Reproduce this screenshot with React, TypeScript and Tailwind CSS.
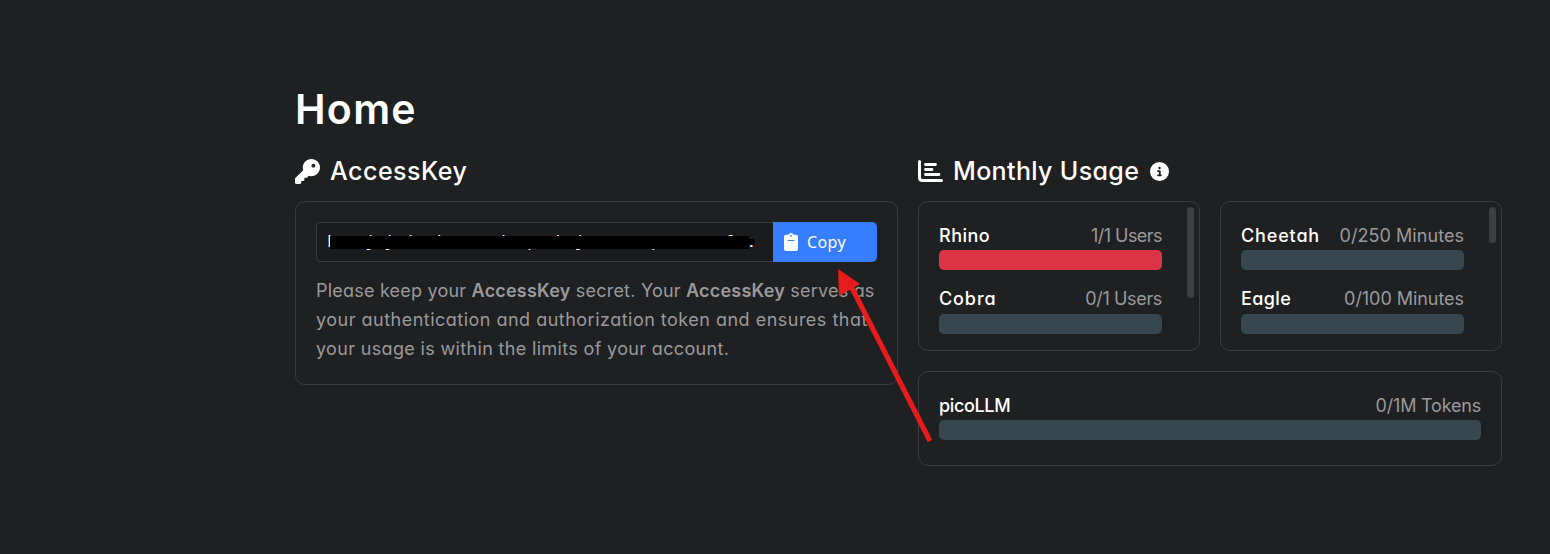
import type { ReactNode } from "react";
import { FaKey, FaCircleInfo } from "react-icons/fa6";

const Line = ({ className, children }: { className: string; children: ReactNode }) => (
  <span className={`block whitespace-nowrap ${className}`}>{children}</span>
);

type Usage = {
  name: string;
  value: string;
  nameClass: string;
  valueClass: string;
  full?: boolean;
  labelHeight?: string;
};

function Meter({ name, value, nameClass, valueClass, full, labelHeight = "h-7" }: Usage) {
  return (
    <div>
      <div className={`flex items-start justify-between whitespace-nowrap leading-7 ${labelHeight}`}>
        <span className={`font-medium text-white ${nameClass}`}>{name}</span>
        <span className={`text-[#9a9a9b] ${valueClass}`}>{value}</span>
      </div>
      <div className={`h-5 rounded-[5px] ${full ? "bg-[#dc3545]" : "bg-[#37474f]"}`} />
    </div>
  );
}

function ScrollCard({ items, thumb }: { items: Usage[]; thumb: string }) {
  return (
    <div className="relative h-[150px] w-[282px] rounded-[10px] border border-[#3b3c3e] pt-5 pr-[37px] pl-5">
      <div className="flex flex-col gap-[15px]">
        {items.map((u) => (
          <Meter key={u.name} {...u} />
        ))}
      </div>
      <div className={`absolute top-[5px] right-[5px] w-[7px] rounded-full bg-[#3e3f41] ${thumb}`} />
    </div>
  );
}

export default function App() {
  return (
    <div className="relative h-[554px] w-[1550px] overflow-hidden bg-[#1f2022] pt-[84px] pl-[295px] font-['Inter',sans-serif] text-[18px] [font-feature-settings:'cv11']">
      <h1 className="h-[70px] text-[41px] leading-[50px] font-semibold tracking-[1.3px] text-white">
        <span>Home</span>
      </h1>
      <div className="flex gap-5">
        <section className="w-[603px]">
          <h2 className="mb-2 flex h-[39px] items-center pb-[5px] text-[25px] font-medium text-white">
            <FaKey className="mr-[10px] size-[25px]" />
            <span className="pt-[2px] tracking-[0.5px]">AccessKey</span>
          </h2>
          <div className="h-[184px] rounded-[10px] border border-[#3b3c3e] px-5 pt-5">
            <div className="flex h-10">
              <div className="relative flex flex-1 items-center rounded-l-[5px] border border-r-0 border-[#3b3c3e] bg-[#1a1b1d] pl-[10px] font-['DejaVu_Sans_Mono',monospace] text-[16px] tracking-[-0.1px] text-white">
                <span className="whitespace-pre">Lxxxjxjxdxxdxxxxxxixxpxxhxjxxxxxxxpxxxxxxxlx.</span>
                <div className="absolute top-[13px] left-[13px] h-[13px] w-[419px] bg-black" />
                <div className="absolute top-[16px] left-[430px] h-[6px] w-[8px] rounded-r bg-black" />
              </div>
              <button className="flex w-[104px] items-center rounded-r-[5px] bg-[#377dff] pl-[11px] font-['Noto_Sans',sans-serif] text-[16px] tracking-[0.4px] text-white">
                <svg viewBox="0 0 14 18" className="mr-[9px] h-[18px] w-[14px]">
                  <path
                    fill="currentColor"
                    fillRule="evenodd"
                    d="M2 1.8H4.4Q5.2 0 7 0T9.6 1.8H12A2 2 0 0 1 14 3.8V16A2 2 0 0 1 12 18H2A2 2 0 0 1 0 16V3.8A2 2 0 0 1 2 1.8ZM7 2.1A.9.9 0 1 0 7 3.9A.9.9 0 1 0 7 2.1ZM4 6.9A.5.5 0 0 0 4 7.9H10A.5.5 0 0 0 10 6.9Z"
                  />
                </svg>
                <span>Copy</span>
              </button>
            </div>
            <p className="mt-[14px] leading-[29px] text-[#9a9a9b]">
              <Line className="tracking-[0.21px]">
                Please keep your <b className="font-semibold">AccessKey</b> secret. Your{" "}
                <b className="font-semibold">AccessKey</b> serves as
              </Line>
              <Line className="tracking-[0.49px]">your authentication and authorization token and ensures that</Line>
              <Line className="tracking-[0.34px]">your usage is within the limits of your account.</Line>
            </p>
          </div>
        </section>
        <section className="w-[584px]">
          <h2 className="mb-2 flex h-[39px] items-center pb-[5px] text-[25px] font-medium text-white">
            <svg viewBox="0 0 25 22" className="mr-[10px] h-[22px] w-[25px]" fill="none" stroke="currentColor" strokeLinecap="round">
              <path strokeWidth="3" d="M1.5 1.5V17.5Q1.5 20.5 4.5 20.5H23.5" />
              <path strokeWidth="2.8" d="M7.5 4.5H17.5M7.5 9.5H14M7.5 14.5H21" />
            </svg>
            <span className="pt-[2px] tracking-[0.35px]">Monthly Usage</span>
            <FaCircleInfo className="ml-[11px] size-[19px]" />
          </h2>
          <div className="flex gap-5">
            <ScrollCard
              thumb="h-[91px]"
              items={[
                { name: "Rhino", value: "1/1 Users", nameClass: "tracking-[0.5px]", valueClass: "tracking-[-0.55px]", full: true },
                { name: "Cobra", value: "0/1 Users", nameClass: "tracking-[0.9px]", valueClass: "tracking-[-0.35px]", labelHeight: "h-[29px]" },
              ]}
            />
            <ScrollCard
              thumb="h-[36px]"
              items={[
                { name: "Cheetah", value: "0/250 Minutes", nameClass: "tracking-[0.85px]", valueClass: "tracking-[0.05px]" },
                { name: "Eagle", value: "0/100 Minutes", nameClass: "tracking-[0.4px]", valueClass: "tracking-[-0.05px]", labelHeight: "h-[29px]" },
              ]}
            />
          </div>
          <div className="mt-5 h-[95px] rounded-[10px] border border-[#3b3c3e] px-5 pt-5">
            <Meter name="picoLLM" value="0/1M Tokens" nameClass="tracking-[-0.35px]" valueClass="tracking-[-0.2px]" />
          </div>
        </section>
      </div>
      <svg viewBox="0 0 100 180" className="absolute top-[266px] left-[835px] h-[180px] w-[100px]">
        <path d="M16 20L95 175" stroke="#e61c1c" strokeWidth="5" />
        <path d="M3 3L25 18L4 30Z" fill="#e61c1c" />
      </svg>
    </div>
  );
}
